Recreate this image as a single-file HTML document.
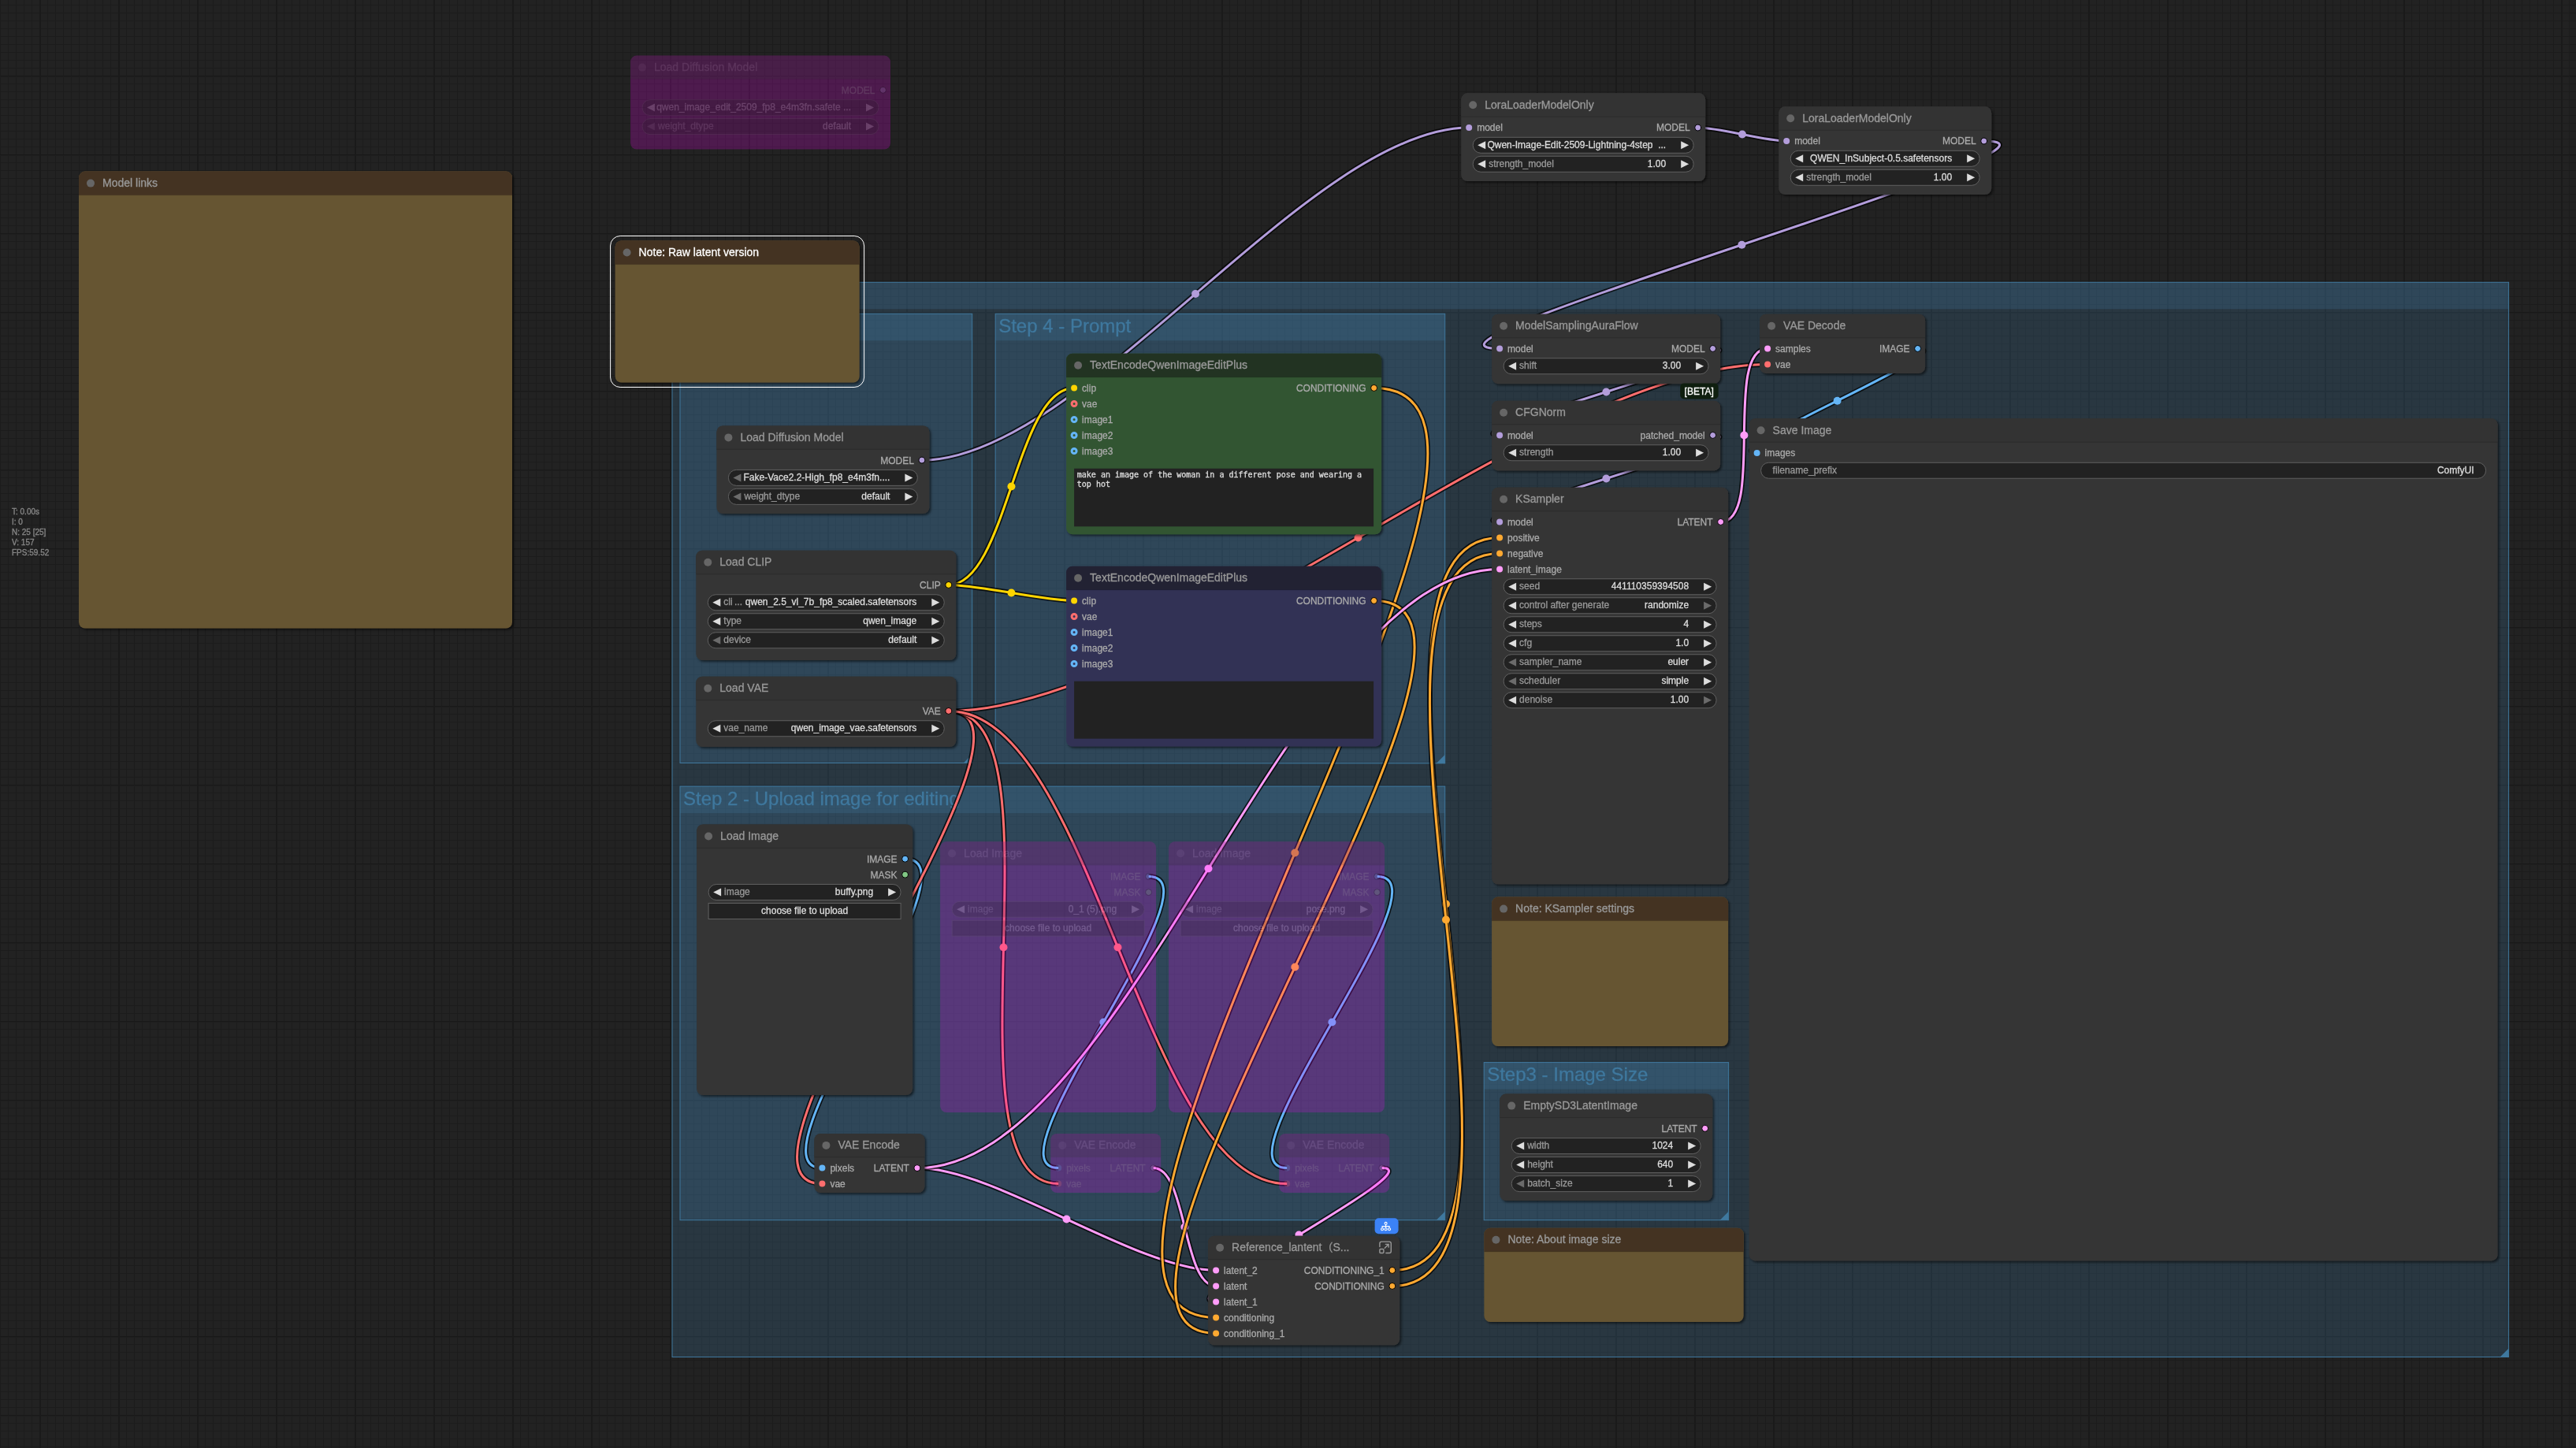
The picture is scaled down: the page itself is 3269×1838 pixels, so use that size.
<!DOCTYPE html>
<html lang="en">
<head>
<meta charset="utf-8">
<title>ComfyUI</title>
<style>
html,body{margin:0;padding:0;}
body{width:3269px;height:1838px;overflow:hidden;background-color:#222;
background-image:
 linear-gradient(to right,#1a1a1a 2px,transparent 2px),
 linear-gradient(to bottom,#191919 1px,#1e1e1e 1px,#1e1e1e 2px,transparent 2px),
 linear-gradient(to right,#1c1c1c 1px,transparent 1px),
 linear-gradient(to bottom,#1c1c1c 1px,transparent 1px);
background-size:100px 100px,100px 100px,10px 10px,10px 10px;
background-position:50px 0,0 96px,0 0,0 6px;}
svg{display:block;position:absolute;left:0;top:0;will-change:transform;}
text{white-space:pre;stroke-width:0.3px;}
</style>
</head>
<body>
<svg width="3269" height="1838" viewBox="0 0 3269 1838" font-family='"Liberation Sans", Arial, "Noto Sans CJK SC", sans-serif'><defs><filter id="sh" x="-5%" y="-5%" width="115%" height="115%"><feDropShadow dx="2" dy="2" stdDeviation="1.6" flood-color="#000" flood-opacity="0.55"/></filter></defs><g id="groups"><rect x="853" y="358.3" width="2330.6" height="34" fill="#3f789e" fill-opacity="0.25"/><rect x="853" y="358.3" width="2330.6" height="1364.2" fill="#3f789e" fill-opacity="0.25"/><rect x="853" y="358.3" width="2330.6" height="1364.2" fill="none" stroke="#3f789e" stroke-width="1"/><path d="M3183.6 1722.5H3172.6L3183.6 1711.5Z" fill="#3f789e"/><rect x="863" y="398.3" width="370.7" height="34" fill="#3f789e" fill-opacity="0.25"/><rect x="863" y="398.3" width="370.7" height="570.2" fill="#3f789e" fill-opacity="0.25"/><rect x="863" y="398.3" width="370.7" height="570.2" fill="none" stroke="#3f789e" stroke-width="1"/><path d="M1233.7 968.5H1222.7L1233.7 957.5Z" fill="#3f789e"/><rect x="1263.2" y="398.3" width="570.5" height="34" fill="#3f789e" fill-opacity="0.25"/><rect x="1263.2" y="398.3" width="570.5" height="570.6" fill="#3f789e" fill-opacity="0.25"/><rect x="1263.2" y="398.3" width="570.5" height="570.6" fill="none" stroke="#3f789e" stroke-width="1"/><path d="M1833.7 968.9H1822.7L1833.7 957.9Z" fill="#3f789e"/><text x="1267.2" y="422" font-size="24" fill="#3f789e" stroke="#3f789e">Step 4 - Prompt</text><rect x="863" y="998.1" width="970.7" height="34" fill="#3f789e" fill-opacity="0.25"/><rect x="863" y="998.1" width="970.7" height="550.6" fill="#3f789e" fill-opacity="0.25"/><rect x="863" y="998.1" width="970.7" height="550.6" fill="none" stroke="#3f789e" stroke-width="1"/><path d="M1833.7 1548.7H1822.7L1833.7 1537.7Z" fill="#3f789e"/><text x="867" y="1021.8" font-size="24" fill="#3f789e" stroke="#3f789e">Step 2 - Upload image for editing</text><rect x="1883.2" y="1348.6" width="310.4" height="34" fill="#3f789e" fill-opacity="0.25"/><rect x="1883.2" y="1348.6" width="310.4" height="200.1" fill="#3f789e" fill-opacity="0.25"/><rect x="1883.2" y="1348.6" width="310.4" height="200.1" fill="none" stroke="#3f789e" stroke-width="1"/><path d="M2193.6 1548.7H2182.6L2193.6 1537.7Z" fill="#3f789e"/><text x="1887.2" y="1372.3" font-size="24" fill="#3f789e" stroke="#3f789e">Step3 - Image Size</text></g><g id="info" font-size="10" fill="#888" stroke="#888"><text x="15" y="652.5">T: 0.00s</text><text x="15" y="665.5">I: 0</text><text x="15" y="678.5">N: 25 [25]</text><text x="15" y="691.5">V: 157</text><text x="15" y="704.5">FPS:59.52</text></g><g id="links" fill="none" stroke-linecap="butt"><path d="M1169.9 584.1C1373.03 584.1 1661.07 162 1864.2 162" stroke="#000" stroke-opacity="0.72" stroke-width="6.4"/><path d="M1169.9 584.1C1373.03 584.1 1661.07 162 1864.2 162" stroke="#B39DDB" stroke-width="3"/><circle cx="1517.05" cy="373.05" r="5" fill="#B39DDB"/><path d="M2154.7 162C2183.14 162 2238.76 179 2267.2 179" stroke="#000" stroke-opacity="0.72" stroke-width="6.4"/><path d="M2154.7 162C2183.14 162 2238.76 179 2267.2 179" stroke="#B39DDB" stroke-width="3"/><circle cx="2210.95" cy="170.5" r="5" fill="#B39DDB"/><path d="M2517.7 179C2684.87 179 1735.93 442.45 1903.1 442.45" stroke="#000" stroke-opacity="0.72" stroke-width="6.4"/><path d="M2517.7 179C2684.87 179 1735.93 442.45 1903.1 442.45" stroke="#B39DDB" stroke-width="3"/><circle cx="2210.4" cy="310.72" r="5" fill="#B39DDB"/><path d="M2173.6 442.45C2246.6 442.45 1830.1 552.45 1903.1 552.45" stroke="#000" stroke-opacity="0.72" stroke-width="6.4"/><path d="M2173.6 442.45C2246.6 442.45 1830.1 552.45 1903.1 552.45" stroke="#B39DDB" stroke-width="3"/><circle cx="2038.35" cy="497.45" r="5" fill="#B39DDB"/><path d="M1203.8 742.45C1277.91 742.45 1288.99 492.45 1363.1 492.45" stroke="#000" stroke-opacity="0.72" stroke-width="6.4"/><path d="M1203.8 742.45C1277.91 742.45 1288.99 492.45 1363.1 492.45" stroke="#FFD500" stroke-width="3"/><circle cx="1283.45" cy="617.45" r="5" fill="#FFD500"/><path d="M1203.8 742.45C1243.94 742.45 1322.96 762.45 1363.1 762.45" stroke="#000" stroke-opacity="0.72" stroke-width="6.4"/><path d="M1203.8 742.45C1243.94 742.45 1322.96 762.45 1363.1 762.45" stroke="#FFD500" stroke-width="3"/><circle cx="1283.45" cy="752.45" r="5" fill="#FFD500"/><path d="M1203.8 902.45C1485.95 902.45 1960.95 462.45 2243.1 462.45" stroke="#000" stroke-opacity="0.72" stroke-width="6.4"/><path d="M1203.8 902.45C1485.95 902.45 1960.95 462.45 2243.1 462.45" stroke="#FF6E6E" stroke-width="3"/><circle cx="1723.45" cy="682.45" r="5" fill="#FF6E6E"/><path d="M2183.6 662.45C2240.58 662.45 2186.12 442.45 2243.1 442.45" stroke="#000" stroke-opacity="0.72" stroke-width="6.4"/><path d="M2183.6 662.45C2240.58 662.45 2186.12 442.45 2243.1 442.45" stroke="#FF9CF9" stroke-width="3"/><circle cx="2213.35" cy="552.45" r="5" fill="#FF9CF9"/><path d="M2433.6 442.45C2494.41 442.45 2168.79 574.95 2229.6 574.95" stroke="#000" stroke-opacity="0.72" stroke-width="6.4"/><path d="M2433.6 442.45C2494.41 442.45 2168.79 574.95 2229.6 574.95" stroke="#64B5F6" stroke-width="3"/><circle cx="2331.6" cy="508.7" r="5" fill="#64B5F6"/><path d="M1148.6 1090.2C1250.16 1090.2 941.84 1482.6 1043.4 1482.6" stroke="#000" stroke-opacity="0.72" stroke-width="6.4"/><path d="M1148.6 1090.2C1250.16 1090.2 941.84 1482.6 1043.4 1482.6" stroke="#64B5F6" stroke-width="3"/><circle cx="1096" cy="1286.4" r="5" fill="#64B5F6"/><path d="M1203.8 902.45C1359.1 902.45 888.1 1502.6 1043.4 1502.6" stroke="#000" stroke-opacity="0.72" stroke-width="6.4"/><path d="M1203.8 902.45C1359.1 902.45 888.1 1502.6 1043.4 1502.6" stroke="#FF6E6E" stroke-width="3"/><circle cx="1123.6" cy="1202.53" r="5" fill="#FF6E6E"/><path d="M1457.6 1112.55C1554.43 1112.55 1246.37 1482.6 1343.2 1482.6" stroke="#000" stroke-opacity="0.72" stroke-width="6.4"/><path d="M1457.6 1112.55C1554.43 1112.55 1246.37 1482.6 1343.2 1482.6" stroke="#64B5F6" stroke-width="3"/><circle cx="1400.4" cy="1297.58" r="5" fill="#64B5F6"/><path d="M1203.8 902.45C1357.83 902.45 1189.17 1502.6 1343.2 1502.6" stroke="#000" stroke-opacity="0.72" stroke-width="6.4"/><path d="M1203.8 902.45C1357.83 902.45 1189.17 1502.6 1343.2 1502.6" stroke="#FF6E6E" stroke-width="3"/><circle cx="1273.5" cy="1202.53" r="5" fill="#FF6E6E"/><path d="M1747.6 1112.55C1844.43 1112.55 1536.37 1482.6 1633.2 1482.6" stroke="#000" stroke-opacity="0.72" stroke-width="6.4"/><path d="M1747.6 1112.55C1844.43 1112.55 1536.37 1482.6 1633.2 1482.6" stroke="#64B5F6" stroke-width="3"/><circle cx="1690.4" cy="1297.58" r="5" fill="#64B5F6"/><path d="M1203.8 902.45C1388.29 902.45 1448.71 1502.6 1633.2 1502.6" stroke="#000" stroke-opacity="0.72" stroke-width="6.4"/><path d="M1203.8 902.45C1388.29 902.45 1448.71 1502.6 1633.2 1502.6" stroke="#FF6E6E" stroke-width="3"/><circle cx="1418.5" cy="1202.53" r="5" fill="#FF6E6E"/><path d="M1163.9 1482.6C1264.1 1482.6 1442.9 1612.45 1543.1 1612.45" stroke="#000" stroke-opacity="0.72" stroke-width="6.4"/><path d="M1163.9 1482.6C1264.1 1482.6 1442.9 1612.45 1543.1 1612.45" stroke="#FF9CF9" stroke-width="3"/><circle cx="1353.5" cy="1547.53" r="5" fill="#FF9CF9"/><path d="M1463.7 1482.6C1506.1 1482.6 1500.7 1632.45 1543.1 1632.45" stroke="#000" stroke-opacity="0.72" stroke-width="6.4"/><path d="M1463.7 1482.6C1506.1 1482.6 1500.7 1632.45 1543.1 1632.45" stroke="#FF9CF9" stroke-width="3"/><circle cx="1503.4" cy="1557.53" r="5" fill="#FF9CF9"/><path d="M1753.7 1482.6C1821.34 1482.6 1475.46 1652.45 1543.1 1652.45" stroke="#000" stroke-opacity="0.72" stroke-width="6.4"/><path d="M1753.7 1482.6C1821.34 1482.6 1475.46 1652.45 1543.1 1652.45" stroke="#FF9CF9" stroke-width="3"/><circle cx="1648.4" cy="1567.53" r="5" fill="#FF9CF9"/><path d="M1743.6 492.45C2042.83 492.45 1243.87 1672.45 1543.1 1672.45" stroke="#000" stroke-opacity="0.72" stroke-width="6.4"/><path d="M1743.6 492.45C2042.83 492.45 1243.87 1672.45 1543.1 1672.45" stroke="#FFA931" stroke-width="3"/><circle cx="1643.35" cy="1082.45" r="5" fill="#FFA931"/><path d="M1743.6 762.45C1981.44 762.45 1305.26 1692.45 1543.1 1692.45" stroke="#000" stroke-opacity="0.72" stroke-width="6.4"/><path d="M1743.6 762.45C1981.44 762.45 1305.26 1692.45 1543.1 1692.45" stroke="#FFA931" stroke-width="3"/><circle cx="1643.35" cy="1227.45" r="5" fill="#FFA931"/><path d="M2173.6 552.45C2246.6 552.45 1830.1 662.45 1903.1 662.45" stroke="#000" stroke-opacity="0.72" stroke-width="6.4"/><path d="M2173.6 552.45C2246.6 552.45 1830.1 662.45 1903.1 662.45" stroke="#B39DDB" stroke-width="3"/><circle cx="2038.35" cy="607.45" r="5" fill="#B39DDB"/><path d="M1766.8 1612.45C2001.78 1612.45 1668.12 682.45 1903.1 682.45" stroke="#000" stroke-opacity="0.72" stroke-width="6.4"/><path d="M1766.8 1612.45C2001.78 1612.45 1668.12 682.45 1903.1 682.45" stroke="#FFA931" stroke-width="3"/><circle cx="1834.95" cy="1147.45" r="5" fill="#FFA931"/><path d="M1766.8 1632.45C2001.78 1632.45 1668.12 702.45 1903.1 702.45" stroke="#000" stroke-opacity="0.72" stroke-width="6.4"/><path d="M1766.8 1632.45C2001.78 1632.45 1668.12 702.45 1903.1 702.45" stroke="#FFA931" stroke-width="3"/><circle cx="1834.95" cy="1167.45" r="5" fill="#FFA931"/><path d="M1163.9 1482.6C1428.98 1482.6 1638.02 722.45 1903.1 722.45" stroke="#000" stroke-opacity="0.72" stroke-width="6.4"/><path d="M1163.9 1482.6C1428.98 1482.6 1638.02 722.45 1903.1 722.45" stroke="#FF9CF9" stroke-width="3"/><circle cx="1533.5" cy="1102.53" r="5" fill="#FF9CF9"/></g><g id="nodes"><g filter="url(#sh)"><rect x="100" y="217.6" width="550" height="579.9" rx="8" fill="#653"/></g><g><path d="M108 217.6H642A8 8 0 0 1 650 225.6V247.6H100V225.6A8 8 0 0 1 108 217.6Z" fill="#432"/><rect x="100" y="247" width="550" height="1.2" fill="#000" fill-opacity="0.13"/><circle cx="115" cy="232.6" r="5" fill="#666"/><text x="130" y="237.1" font-size="14" fill="#999" stroke="#999">Model links</text></g><g opacity="0.2"><rect x="800" y="70.6" width="330" height="118.9" rx="8" fill="#FF00FF"/></g><g opacity="0.2"><path d="M808 70.6H1122A8 8 0 0 1 1130 78.6V100.6H800V78.6A8 8 0 0 1 808 70.6Z" fill="#333"/><rect x="800" y="100" width="330" height="1.2" fill="#000" fill-opacity="0.13"/><circle cx="815" cy="85.6" r="5" fill="#666"/><text x="830" y="90.1" font-size="14" fill="#999" stroke="#999">Load Diffusion Model</text><circle cx="1120.5" cy="114.3" r="4" fill="#B39DDB" stroke="#000" stroke-width="1"/><text x="1110.5" y="118.7" font-size="12" fill="#AAA" stroke="#AAA" text-anchor="end">MODEL</text><rect x="815" y="126.6" width="300" height="20" rx="10" fill="#222" stroke="#606060"/><path d="M831 131.6L821 136.6L831 141.6Z" fill="#DDD"/><path d="M1099 131.6L1109 136.6L1099 141.6Z" fill="#DDD"/><text x="1080" y="140.1" font-size="12" fill="#DDD" stroke="#DDD" text-anchor="end">qwen_image_edit_2509_fp8_e4m3fn.safete ...</text><rect x="815" y="150.6" width="300" height="20" rx="10" fill="#222" stroke="#606060"/><path d="M831 155.6L821 160.6L831 165.6Z" fill="#6b6b6b"/><path d="M1099 155.6L1109 160.6L1099 165.6Z" fill="#DDD"/><text x="835" y="164.1" font-size="12" fill="#999" stroke="#999">weight_dtype</text><text x="1080" y="164.1" font-size="12" fill="#DDD" stroke="#DDD" text-anchor="end">default</text></g><g filter="url(#sh)"><rect x="909.4" y="540.4" width="270" height="111.6" rx="8" fill="#353535"/></g><g><path d="M917.4 540.4H1171.4A8 8 0 0 1 1179.4 548.4V570.4H909.4V548.4A8 8 0 0 1 917.4 540.4Z" fill="#333"/><rect x="909.4" y="569.8" width="270" height="1.2" fill="#000" fill-opacity="0.13"/><circle cx="924.4" cy="555.4" r="5" fill="#666"/><text x="939.4" y="559.9" font-size="14" fill="#999" stroke="#999">Load Diffusion Model</text><circle cx="1169.9" cy="584.1" r="4" fill="#B39DDB" stroke="#000" stroke-width="1"/><text x="1159.9" y="588.5" font-size="12" fill="#AAA" stroke="#AAA" text-anchor="end">MODEL</text><rect x="924.4" y="596.4" width="240" height="20" rx="10" fill="#222" stroke="#606060"/><path d="M940.4 601.4L930.4 606.4L940.4 611.4Z" fill="#6b6b6b"/><path d="M1148.4 601.4L1158.4 606.4L1148.4 611.4Z" fill="#DDD"/><text x="1129.4" y="609.9" font-size="12" fill="#DDD" stroke="#DDD" text-anchor="end">Fake-Vace2.2-High_fp8_e4m3fn....</text><rect x="924.4" y="620.4" width="240" height="20" rx="10" fill="#222" stroke="#606060"/><path d="M940.4 625.4L930.4 630.4L940.4 635.4Z" fill="#6b6b6b"/><path d="M1148.4 625.4L1158.4 630.4L1148.4 635.4Z" fill="#DDD"/><text x="944.4" y="633.9" font-size="12" fill="#999" stroke="#999">weight_dtype</text><text x="1129.4" y="633.9" font-size="12" fill="#DDD" stroke="#DDD" text-anchor="end">default</text></g><g filter="url(#sh)"><rect x="883.3" y="698.75" width="330" height="139.25" rx="8" fill="#353535"/></g><g><path d="M891.3 698.75H1205.3A8 8 0 0 1 1213.3 706.75V728.75H883.3V706.75A8 8 0 0 1 891.3 698.75Z" fill="#333"/><rect x="883.3" y="728.15" width="330" height="1.2" fill="#000" fill-opacity="0.13"/><circle cx="898.3" cy="713.75" r="5" fill="#666"/><text x="913.3" y="718.25" font-size="14" fill="#999" stroke="#999">Load CLIP</text><circle cx="1203.8" cy="742.45" r="4" fill="#FFD500" stroke="#000" stroke-width="1"/><text x="1193.8" y="746.85" font-size="12" fill="#AAA" stroke="#AAA" text-anchor="end">CLIP</text><rect x="898.3" y="754.75" width="300" height="20" rx="10" fill="#222" stroke="#606060"/><path d="M914.3 759.75L904.3 764.75L914.3 769.75Z" fill="#DDD"/><path d="M1182.3 759.75L1192.3 764.75L1182.3 769.75Z" fill="#DDD"/><text x="918.3" y="768.25" font-size="12" fill="#999" stroke="#999">cli ...</text><text x="1163.3" y="768.25" font-size="12" fill="#DDD" stroke="#DDD" text-anchor="end">qwen_2.5_vl_7b_fp8_scaled.safetensors</text><rect x="898.3" y="778.75" width="300" height="20" rx="10" fill="#222" stroke="#606060"/><path d="M914.3 783.75L904.3 788.75L914.3 793.75Z" fill="#DDD"/><path d="M1182.3 783.75L1192.3 788.75L1182.3 793.75Z" fill="#DDD"/><text x="918.3" y="792.25" font-size="12" fill="#999" stroke="#999">type</text><text x="1163.3" y="792.25" font-size="12" fill="#DDD" stroke="#DDD" text-anchor="end">qwen_image</text><rect x="898.3" y="802.75" width="300" height="20" rx="10" fill="#222" stroke="#606060"/><path d="M914.3 807.75L904.3 812.75L914.3 817.75Z" fill="#6b6b6b"/><path d="M1182.3 807.75L1192.3 812.75L1182.3 817.75Z" fill="#DDD"/><text x="918.3" y="816.25" font-size="12" fill="#999" stroke="#999">device</text><text x="1163.3" y="816.25" font-size="12" fill="#DDD" stroke="#DDD" text-anchor="end">default</text></g><g filter="url(#sh)"><rect x="883.3" y="858.75" width="330" height="89.25" rx="8" fill="#353535"/></g><g><path d="M891.3 858.75H1205.3A8 8 0 0 1 1213.3 866.75V888.75H883.3V866.75A8 8 0 0 1 891.3 858.75Z" fill="#333"/><rect x="883.3" y="888.15" width="330" height="1.2" fill="#000" fill-opacity="0.13"/><circle cx="898.3" cy="873.75" r="5" fill="#666"/><text x="913.3" y="878.25" font-size="14" fill="#999" stroke="#999">Load VAE</text><circle cx="1203.8" cy="902.45" r="4" fill="#FF6E6E" stroke="#000" stroke-width="1"/><text x="1193.8" y="906.85" font-size="12" fill="#AAA" stroke="#AAA" text-anchor="end">VAE</text><rect x="898.3" y="914.75" width="300" height="20" rx="10" fill="#222" stroke="#606060"/><path d="M914.3 919.75L904.3 924.75L914.3 929.75Z" fill="#DDD"/><path d="M1182.3 919.75L1192.3 924.75L1182.3 929.75Z" fill="#DDD"/><text x="918.3" y="928.25" font-size="12" fill="#999" stroke="#999">vae_name</text><text x="1163.3" y="928.25" font-size="12" fill="#DDD" stroke="#DDD" text-anchor="end">qwen_image_vae.safetensors</text></g><g filter="url(#sh)"><rect x="1353.1" y="448.75" width="400" height="229.55" rx="8" fill="#353"/></g><g><path d="M1361.1 448.75H1745.1A8 8 0 0 1 1753.1 456.75V478.75H1353.1V456.75A8 8 0 0 1 1361.1 448.75Z" fill="#232"/><rect x="1353.1" y="478.15" width="400" height="1.2" fill="#000" fill-opacity="0.13"/><circle cx="1368.1" cy="463.75" r="5" fill="#666"/><text x="1383.1" y="468.25" font-size="14" fill="#999" stroke="#999">TextEncodeQwenImageEditPlus</text><circle cx="1363.1" cy="492.45" r="4" fill="#FFD500"/><text x="1373.1" y="496.85" font-size="12" fill="#AAA" stroke="#AAA">clip</text><circle cx="1363.1" cy="512.45" r="3" fill="none" stroke="#FF6E6E" stroke-width="3"/><text x="1373.1" y="516.85" font-size="12" fill="#AAA" stroke="#AAA">vae</text><circle cx="1363.1" cy="532.45" r="3" fill="none" stroke="#64B5F6" stroke-width="3"/><text x="1373.1" y="536.85" font-size="12" fill="#AAA" stroke="#AAA">image1</text><circle cx="1363.1" cy="552.45" r="3" fill="none" stroke="#64B5F6" stroke-width="3"/><text x="1373.1" y="556.85" font-size="12" fill="#AAA" stroke="#AAA">image2</text><circle cx="1363.1" cy="572.45" r="3" fill="none" stroke="#64B5F6" stroke-width="3"/><text x="1373.1" y="576.85" font-size="12" fill="#AAA" stroke="#AAA">image3</text><circle cx="1743.6" cy="492.45" r="4" fill="#FFA931" stroke="#000" stroke-width="1"/><text x="1733.6" y="496.85" font-size="12" fill="#AAA" stroke="#AAA" text-anchor="end">CONDITIONING</text><rect x="1363.1" y="594.75" width="380" height="73.55" fill="#222"/><text x="1366.8" y="605.75" font-size="10" fill="#ddd" stroke="#ddd" font-family='"DejaVu Sans Mono", "Liberation Mono", monospace'>make an image of the woman in a different pose and wearing a</text><text x="1366.8" y="617.75" font-size="10" fill="#ddd" stroke="#ddd" font-family='"DejaVu Sans Mono", "Liberation Mono", monospace'>top hot</text></g><g filter="url(#sh)"><rect x="1353.1" y="718.75" width="400" height="228.85" rx="8" fill="#335"/></g><g><path d="M1361.1 718.75H1745.1A8 8 0 0 1 1753.1 726.75V748.75H1353.1V726.75A8 8 0 0 1 1361.1 718.75Z" fill="#223"/><rect x="1353.1" y="748.15" width="400" height="1.2" fill="#000" fill-opacity="0.13"/><circle cx="1368.1" cy="733.75" r="5" fill="#666"/><text x="1383.1" y="738.25" font-size="14" fill="#999" stroke="#999">TextEncodeQwenImageEditPlus</text><circle cx="1363.1" cy="762.45" r="4" fill="#FFD500"/><text x="1373.1" y="766.85" font-size="12" fill="#AAA" stroke="#AAA">clip</text><circle cx="1363.1" cy="782.45" r="3" fill="none" stroke="#FF6E6E" stroke-width="3"/><text x="1373.1" y="786.85" font-size="12" fill="#AAA" stroke="#AAA">vae</text><circle cx="1363.1" cy="802.45" r="3" fill="none" stroke="#64B5F6" stroke-width="3"/><text x="1373.1" y="806.85" font-size="12" fill="#AAA" stroke="#AAA">image1</text><circle cx="1363.1" cy="822.45" r="3" fill="none" stroke="#64B5F6" stroke-width="3"/><text x="1373.1" y="826.85" font-size="12" fill="#AAA" stroke="#AAA">image2</text><circle cx="1363.1" cy="842.45" r="3" fill="none" stroke="#64B5F6" stroke-width="3"/><text x="1373.1" y="846.85" font-size="12" fill="#AAA" stroke="#AAA">image3</text><circle cx="1743.6" cy="762.45" r="4" fill="#FFA931" stroke="#000" stroke-width="1"/><text x="1733.6" y="766.85" font-size="12" fill="#AAA" stroke="#AAA" text-anchor="end">CONDITIONING</text><rect x="1363.1" y="864.75" width="380" height="72.85" fill="#222"/></g><g filter="url(#sh)"><rect x="1854.2" y="118.3" width="310" height="111.7" rx="8" fill="#353535"/></g><g><path d="M1862.2 118.3H2156.2A8 8 0 0 1 2164.2 126.3V148.3H1854.2V126.3A8 8 0 0 1 1862.2 118.3Z" fill="#333"/><rect x="1854.2" y="147.7" width="310" height="1.2" fill="#000" fill-opacity="0.13"/><circle cx="1869.2" cy="133.3" r="5" fill="#666"/><text x="1884.2" y="137.8" font-size="14" fill="#999" stroke="#999">LoraLoaderModelOnly</text><circle cx="1864.2" cy="162" r="4" fill="#B39DDB"/><text x="1874.2" y="166.4" font-size="12" fill="#AAA" stroke="#AAA">model</text><circle cx="2154.7" cy="162" r="4" fill="#B39DDB" stroke="#000" stroke-width="1"/><text x="2144.7" y="166.4" font-size="12" fill="#AAA" stroke="#AAA" text-anchor="end">MODEL</text><rect x="1869.2" y="174.3" width="280" height="20" rx="10" fill="#222" stroke="#606060"/><path d="M1885.2 179.3L1875.2 184.3L1885.2 189.3Z" fill="#DDD"/><path d="M2133.2 179.3L2143.2 184.3L2133.2 189.3Z" fill="#DDD"/><text x="2114.2" y="187.8" font-size="12" fill="#DDD" stroke="#DDD" text-anchor="end">Qwen-Image-Edit-2509-Lightning-4step  ...</text><rect x="1869.2" y="198.3" width="280" height="20" rx="10" fill="#222" stroke="#606060"/><path d="M1885.2 203.3L1875.2 208.3L1885.2 213.3Z" fill="#DDD"/><path d="M2133.2 203.3L2143.2 208.3L2133.2 213.3Z" fill="#DDD"/><text x="1889.2" y="211.8" font-size="12" fill="#999" stroke="#999">strength_model</text><text x="2114.2" y="211.8" font-size="12" fill="#DDD" stroke="#DDD" text-anchor="end">1.00</text></g><g filter="url(#sh)"><rect x="2257.2" y="135.3" width="270" height="111.7" rx="8" fill="#353535"/></g><g><path d="M2265.2 135.3H2519.2A8 8 0 0 1 2527.2 143.3V165.3H2257.2V143.3A8 8 0 0 1 2265.2 135.3Z" fill="#333"/><rect x="2257.2" y="164.7" width="270" height="1.2" fill="#000" fill-opacity="0.13"/><circle cx="2272.2" cy="150.3" r="5" fill="#666"/><text x="2287.2" y="154.8" font-size="14" fill="#999" stroke="#999">LoraLoaderModelOnly</text><circle cx="2267.2" cy="179" r="4" fill="#B39DDB"/><text x="2277.2" y="183.4" font-size="12" fill="#AAA" stroke="#AAA">model</text><circle cx="2517.7" cy="179" r="4" fill="#B39DDB" stroke="#000" stroke-width="1"/><text x="2507.7" y="183.4" font-size="12" fill="#AAA" stroke="#AAA" text-anchor="end">MODEL</text><rect x="2272.2" y="191.3" width="240" height="20" rx="10" fill="#222" stroke="#606060"/><path d="M2288.2 196.3L2278.2 201.3L2288.2 206.3Z" fill="#DDD"/><path d="M2496.2 196.3L2506.2 201.3L2496.2 206.3Z" fill="#DDD"/><text x="2477.2" y="204.8" font-size="12" fill="#DDD" stroke="#DDD" text-anchor="end">QWEN_InSubject-0.5.safetensors</text><rect x="2272.2" y="215.3" width="240" height="20" rx="10" fill="#222" stroke="#606060"/><path d="M2288.2 220.3L2278.2 225.3L2288.2 230.3Z" fill="#DDD"/><path d="M2496.2 220.3L2506.2 225.3L2496.2 230.3Z" fill="#DDD"/><text x="2292.2" y="228.8" font-size="12" fill="#999" stroke="#999">strength_model</text><text x="2477.2" y="228.8" font-size="12" fill="#DDD" stroke="#DDD" text-anchor="end">1.00</text></g><g filter="url(#sh)"><rect x="1893.1" y="398.75" width="290" height="88.45" rx="8" fill="#353535"/></g><g><path d="M1901.1 398.75H2175.1A8 8 0 0 1 2183.1 406.75V428.75H1893.1V406.75A8 8 0 0 1 1901.1 398.75Z" fill="#333"/><rect x="1893.1" y="428.15" width="290" height="1.2" fill="#000" fill-opacity="0.13"/><circle cx="1908.1" cy="413.75" r="5" fill="#666"/><text x="1923.1" y="418.25" font-size="14" fill="#999" stroke="#999">ModelSamplingAuraFlow</text><circle cx="1903.1" cy="442.45" r="4" fill="#B39DDB"/><text x="1913.1" y="446.85" font-size="12" fill="#AAA" stroke="#AAA">model</text><circle cx="2173.6" cy="442.45" r="4" fill="#B39DDB" stroke="#000" stroke-width="1"/><text x="2163.6" y="446.85" font-size="12" fill="#AAA" stroke="#AAA" text-anchor="end">MODEL</text><rect x="1908.1" y="454.75" width="260" height="20" rx="10" fill="#222" stroke="#606060"/><path d="M1924.1 459.75L1914.1 464.75L1924.1 469.75Z" fill="#DDD"/><path d="M2152.1 459.75L2162.1 464.75L2152.1 469.75Z" fill="#DDD"/><text x="1928.1" y="468.25" font-size="12" fill="#999" stroke="#999">shift</text><text x="2133.1" y="468.25" font-size="12" fill="#DDD" stroke="#DDD" text-anchor="end">3.00</text></g><g filter="url(#sh)"><rect x="1893.1" y="508.75" width="290" height="88.65" rx="8" fill="#353535"/></g><g><path d="M1901.1 508.75H2175.1A8 8 0 0 1 2183.1 516.75V538.75H1893.1V516.75A8 8 0 0 1 1901.1 508.75Z" fill="#333"/><rect x="1893.1" y="538.15" width="290" height="1.2" fill="#000" fill-opacity="0.13"/><circle cx="1908.1" cy="523.75" r="5" fill="#666"/><text x="1923.1" y="528.25" font-size="14" fill="#999" stroke="#999">CFGNorm</text><circle cx="1903.1" cy="552.45" r="4" fill="#B39DDB"/><text x="1913.1" y="556.85" font-size="12" fill="#AAA" stroke="#AAA">model</text><circle cx="2173.6" cy="552.45" r="4" fill="#B39DDB" stroke="#000" stroke-width="1"/><text x="2163.6" y="556.85" font-size="12" fill="#AAA" stroke="#AAA" text-anchor="end">patched_model</text><rect x="1908.1" y="564.75" width="260" height="20" rx="10" fill="#222" stroke="#606060"/><path d="M1924.1 569.75L1914.1 574.75L1924.1 579.75Z" fill="#DDD"/><path d="M2152.1 569.75L2162.1 574.75L2152.1 579.75Z" fill="#DDD"/><text x="1928.1" y="578.25" font-size="12" fill="#999" stroke="#999">strength</text><text x="2133.1" y="578.25" font-size="12" fill="#DDD" stroke="#DDD" text-anchor="end">1.00</text></g><g filter="url(#sh)"><rect x="1893.1" y="618.75" width="300" height="503.75" rx="8" fill="#353535"/></g><g><path d="M1901.1 618.75H2185.1A8 8 0 0 1 2193.1 626.75V648.75H1893.1V626.75A8 8 0 0 1 1901.1 618.75Z" fill="#333"/><rect x="1893.1" y="648.15" width="300" height="1.2" fill="#000" fill-opacity="0.13"/><circle cx="1908.1" cy="633.75" r="5" fill="#666"/><text x="1923.1" y="638.25" font-size="14" fill="#999" stroke="#999">KSampler</text><circle cx="1903.1" cy="662.45" r="4" fill="#B39DDB"/><text x="1913.1" y="666.85" font-size="12" fill="#AAA" stroke="#AAA">model</text><circle cx="1903.1" cy="682.45" r="4" fill="#FFA931"/><text x="1913.1" y="686.85" font-size="12" fill="#AAA" stroke="#AAA">positive</text><circle cx="1903.1" cy="702.45" r="4" fill="#FFA931"/><text x="1913.1" y="706.85" font-size="12" fill="#AAA" stroke="#AAA">negative</text><circle cx="1903.1" cy="722.45" r="4" fill="#FF9CF9"/><text x="1913.1" y="726.85" font-size="12" fill="#AAA" stroke="#AAA">latent_image</text><circle cx="2183.6" cy="662.45" r="4" fill="#FF9CF9" stroke="#000" stroke-width="1"/><text x="2173.6" y="666.85" font-size="12" fill="#AAA" stroke="#AAA" text-anchor="end">LATENT</text><rect x="1908.1" y="734.75" width="270" height="20" rx="10" fill="#222" stroke="#606060"/><path d="M1924.1 739.75L1914.1 744.75L1924.1 749.75Z" fill="#DDD"/><path d="M2162.1 739.75L2172.1 744.75L2162.1 749.75Z" fill="#DDD"/><text x="1928.1" y="748.25" font-size="12" fill="#999" stroke="#999">seed</text><text x="2143.1" y="748.25" font-size="12" fill="#DDD" stroke="#DDD" text-anchor="end">441110359394508</text><rect x="1908.1" y="758.75" width="270" height="20" rx="10" fill="#222" stroke="#606060"/><path d="M1924.1 763.75L1914.1 768.75L1924.1 773.75Z" fill="#DDD"/><path d="M2162.1 763.75L2172.1 768.75L2162.1 773.75Z" fill="#6b6b6b"/><text x="1928.1" y="772.25" font-size="12" fill="#999" stroke="#999">control after generate</text><text x="2143.1" y="772.25" font-size="12" fill="#DDD" stroke="#DDD" text-anchor="end">randomize</text><rect x="1908.1" y="782.75" width="270" height="20" rx="10" fill="#222" stroke="#606060"/><path d="M1924.1 787.75L1914.1 792.75L1924.1 797.75Z" fill="#DDD"/><path d="M2162.1 787.75L2172.1 792.75L2162.1 797.75Z" fill="#DDD"/><text x="1928.1" y="796.25" font-size="12" fill="#999" stroke="#999">steps</text><text x="2143.1" y="796.25" font-size="12" fill="#DDD" stroke="#DDD" text-anchor="end">4</text><rect x="1908.1" y="806.75" width="270" height="20" rx="10" fill="#222" stroke="#606060"/><path d="M1924.1 811.75L1914.1 816.75L1924.1 821.75Z" fill="#DDD"/><path d="M2162.1 811.75L2172.1 816.75L2162.1 821.75Z" fill="#DDD"/><text x="1928.1" y="820.25" font-size="12" fill="#999" stroke="#999">cfg</text><text x="2143.1" y="820.25" font-size="12" fill="#DDD" stroke="#DDD" text-anchor="end">1.0</text><rect x="1908.1" y="830.75" width="270" height="20" rx="10" fill="#222" stroke="#606060"/><path d="M1924.1 835.75L1914.1 840.75L1924.1 845.75Z" fill="#6b6b6b"/><path d="M2162.1 835.75L2172.1 840.75L2162.1 845.75Z" fill="#DDD"/><text x="1928.1" y="844.25" font-size="12" fill="#999" stroke="#999">sampler_name</text><text x="2143.1" y="844.25" font-size="12" fill="#DDD" stroke="#DDD" text-anchor="end">euler</text><rect x="1908.1" y="854.75" width="270" height="20" rx="10" fill="#222" stroke="#606060"/><path d="M1924.1 859.75L1914.1 864.75L1924.1 869.75Z" fill="#6b6b6b"/><path d="M2162.1 859.75L2172.1 864.75L2162.1 869.75Z" fill="#DDD"/><text x="1928.1" y="868.25" font-size="12" fill="#999" stroke="#999">scheduler</text><text x="2143.1" y="868.25" font-size="12" fill="#DDD" stroke="#DDD" text-anchor="end">simple</text><rect x="1908.1" y="878.75" width="270" height="20" rx="10" fill="#222" stroke="#606060"/><path d="M1924.1 883.75L1914.1 888.75L1924.1 893.75Z" fill="#DDD"/><path d="M2162.1 883.75L2172.1 888.75L2162.1 893.75Z" fill="#6b6b6b"/><text x="1928.1" y="892.25" font-size="12" fill="#999" stroke="#999">denoise</text><text x="2143.1" y="892.25" font-size="12" fill="#DDD" stroke="#DDD" text-anchor="end">1.00</text></g><g filter="url(#sh)"><rect x="2233.1" y="398.75" width="210" height="75.15" rx="8" fill="#353535"/></g><g><path d="M2241.1 398.75H2435.1A8 8 0 0 1 2443.1 406.75V428.75H2233.1V406.75A8 8 0 0 1 2241.1 398.75Z" fill="#333"/><rect x="2233.1" y="428.15" width="210" height="1.2" fill="#000" fill-opacity="0.13"/><circle cx="2248.1" cy="413.75" r="5" fill="#666"/><text x="2263.1" y="418.25" font-size="14" fill="#999" stroke="#999">VAE Decode</text><circle cx="2243.1" cy="442.45" r="4" fill="#FF9CF9"/><text x="2253.1" y="446.85" font-size="12" fill="#AAA" stroke="#AAA">samples</text><circle cx="2243.1" cy="462.45" r="4" fill="#FF6E6E"/><text x="2253.1" y="466.85" font-size="12" fill="#AAA" stroke="#AAA">vae</text><circle cx="2433.6" cy="442.45" r="4" fill="#64B5F6" stroke="#000" stroke-width="1"/><text x="2423.6" y="446.85" font-size="12" fill="#AAA" stroke="#AAA" text-anchor="end">IMAGE</text></g><g filter="url(#sh)"><rect x="2219.6" y="531.25" width="950" height="1069.15" rx="8" fill="#353535"/></g><g><path d="M2227.6 531.25H3161.6A8 8 0 0 1 3169.6 539.25V561.25H2219.6V539.25A8 8 0 0 1 2227.6 531.25Z" fill="#333"/><rect x="2219.6" y="560.65" width="950" height="1.2" fill="#000" fill-opacity="0.13"/><circle cx="2234.6" cy="546.25" r="5" fill="#666"/><text x="2249.6" y="550.75" font-size="14" fill="#999" stroke="#999">Save Image</text><circle cx="2229.6" cy="574.95" r="4" fill="#64B5F6"/><text x="2239.6" y="579.35" font-size="12" fill="#AAA" stroke="#AAA">images</text><rect x="2234.6" y="587.25" width="920" height="20" rx="10" fill="#222" stroke="#606060"/><text x="2249.6" y="600.75" font-size="12" fill="#999" stroke="#999">filename_prefix</text><text x="3139.6" y="600.75" font-size="12" fill="#DDD" stroke="#DDD" text-anchor="end">ComfyUI</text></g><g filter="url(#sh)"><rect x="1893.1" y="1138.6" width="300" height="189.4" rx="8" fill="#653"/></g><g><path d="M1901.1 1138.6H2185.1A8 8 0 0 1 2193.1 1146.6V1168.6H1893.1V1146.6A8 8 0 0 1 1901.1 1138.6Z" fill="#432"/><rect x="1893.1" y="1168" width="300" height="1.2" fill="#000" fill-opacity="0.13"/><circle cx="1908.1" cy="1153.6" r="5" fill="#666"/><text x="1923.1" y="1158.1" font-size="14" fill="#999" stroke="#999">Note: KSampler settings</text></g><g filter="url(#sh)"><rect x="1903.2" y="1388.6" width="270" height="135.4" rx="8" fill="#353535"/></g><g><path d="M1911.2 1388.6H2165.2A8 8 0 0 1 2173.2 1396.6V1418.6H1903.2V1396.6A8 8 0 0 1 1911.2 1388.6Z" fill="#333"/><rect x="1903.2" y="1418" width="270" height="1.2" fill="#000" fill-opacity="0.13"/><circle cx="1918.2" cy="1403.6" r="5" fill="#666"/><text x="1933.2" y="1408.1" font-size="14" fill="#999" stroke="#999">EmptySD3LatentImage</text><circle cx="2163.7" cy="1432.3" r="4" fill="#FF9CF9" stroke="#000" stroke-width="1"/><text x="2153.7" y="1436.7" font-size="12" fill="#AAA" stroke="#AAA" text-anchor="end">LATENT</text><rect x="1918.2" y="1444.6" width="240" height="20" rx="10" fill="#222" stroke="#606060"/><path d="M1934.2 1449.6L1924.2 1454.6L1934.2 1459.6Z" fill="#DDD"/><path d="M2142.2 1449.6L2152.2 1454.6L2142.2 1459.6Z" fill="#DDD"/><text x="1938.2" y="1458.1" font-size="12" fill="#999" stroke="#999">width</text><text x="2123.2" y="1458.1" font-size="12" fill="#DDD" stroke="#DDD" text-anchor="end">1024</text><rect x="1918.2" y="1468.6" width="240" height="20" rx="10" fill="#222" stroke="#606060"/><path d="M1934.2 1473.6L1924.2 1478.6L1934.2 1483.6Z" fill="#DDD"/><path d="M2142.2 1473.6L2152.2 1478.6L2142.2 1483.6Z" fill="#DDD"/><text x="1938.2" y="1482.1" font-size="12" fill="#999" stroke="#999">height</text><text x="2123.2" y="1482.1" font-size="12" fill="#DDD" stroke="#DDD" text-anchor="end">640</text><rect x="1918.2" y="1492.6" width="240" height="20" rx="10" fill="#222" stroke="#606060"/><path d="M1934.2 1497.6L1924.2 1502.6L1934.2 1507.6Z" fill="#6b6b6b"/><path d="M2142.2 1497.6L2152.2 1502.6L2142.2 1507.6Z" fill="#DDD"/><text x="1938.2" y="1506.1" font-size="12" fill="#999" stroke="#999">batch_size</text><text x="2123.2" y="1506.1" font-size="12" fill="#DDD" stroke="#DDD" text-anchor="end">1</text></g><g filter="url(#sh)"><rect x="1883.4" y="1558.75" width="329.2" height="119.25" rx="8" fill="#653"/></g><g><path d="M1891.4 1558.75H2204.6A8 8 0 0 1 2212.6 1566.75V1588.75H1883.4V1566.75A8 8 0 0 1 1891.4 1558.75Z" fill="#432"/><rect x="1883.4" y="1588.15" width="329.2" height="1.2" fill="#000" fill-opacity="0.13"/><circle cx="1898.4" cy="1573.75" r="5" fill="#666"/><text x="1913.4" y="1578.25" font-size="14" fill="#999" stroke="#999">Note: About image size</text></g><g filter="url(#sh)"><rect x="884.1" y="1046.5" width="274" height="343.5" rx="8" fill="#353535"/></g><g><path d="M892.1 1046.5H1150.1A8 8 0 0 1 1158.1 1054.5V1076.5H884.1V1054.5A8 8 0 0 1 892.1 1046.5Z" fill="#333"/><rect x="884.1" y="1075.9" width="274" height="1.2" fill="#000" fill-opacity="0.13"/><circle cx="899.1" cy="1061.5" r="5" fill="#666"/><text x="914.1" y="1066" font-size="14" fill="#999" stroke="#999">Load Image</text><circle cx="1148.6" cy="1090.2" r="4" fill="#64B5F6" stroke="#000" stroke-width="1"/><text x="1138.6" y="1094.6" font-size="12" fill="#AAA" stroke="#AAA" text-anchor="end">IMAGE</text><circle cx="1148.6" cy="1110.2" r="4" fill="#81C784" stroke="#000" stroke-width="1"/><text x="1138.6" y="1114.6" font-size="12" fill="#AAA" stroke="#AAA" text-anchor="end">MASK</text><rect x="899.1" y="1122.5" width="244" height="20" rx="10" fill="#222" stroke="#606060"/><path d="M915.1 1127.5L905.1 1132.5L915.1 1137.5Z" fill="#DDD"/><path d="M1127.1 1127.5L1137.1 1132.5L1127.1 1137.5Z" fill="#DDD"/><text x="919.1" y="1136" font-size="12" fill="#999" stroke="#999">image</text><text x="1108.1" y="1136" font-size="12" fill="#DDD" stroke="#DDD" text-anchor="end">buffy.png</text><rect x="899.1" y="1146.5" width="244" height="20" fill="#222" stroke="#606060"/><text x="1021.1" y="1160" font-size="12" fill="#DDD" stroke="#DDD" text-anchor="middle">choose file to upload</text></g><g opacity="0.2"><rect x="1193.1" y="1068.25" width="274" height="343.75" rx="8" fill="#FF00FF"/></g><g opacity="0.2"><path d="M1201.1 1068.25H1459.1A8 8 0 0 1 1467.1 1076.25V1098.25H1193.1V1076.25A8 8 0 0 1 1201.1 1068.25Z" fill="#333"/><rect x="1193.1" y="1097.65" width="274" height="1.2" fill="#000" fill-opacity="0.13"/><circle cx="1208.1" cy="1083.25" r="5" fill="#666"/><text x="1223.1" y="1087.75" font-size="14" fill="#999" stroke="#999">Load Image</text><circle cx="1457.6" cy="1112.55" r="4" fill="#64B5F6" stroke="#000" stroke-width="1"/><text x="1447.6" y="1116.95" font-size="12" fill="#AAA" stroke="#AAA" text-anchor="end">IMAGE</text><circle cx="1457.6" cy="1132.55" r="4" fill="#81C784" stroke="#000" stroke-width="1"/><text x="1447.6" y="1136.95" font-size="12" fill="#AAA" stroke="#AAA" text-anchor="end">MASK</text><rect x="1208.1" y="1144.25" width="244" height="20" rx="10" fill="#222" stroke="#606060"/><path d="M1224.1 1149.25L1214.1 1154.25L1224.1 1159.25Z" fill="#DDD"/><path d="M1436.1 1149.25L1446.1 1154.25L1436.1 1159.25Z" fill="#DDD"/><text x="1228.1" y="1157.75" font-size="12" fill="#999" stroke="#999">image</text><text x="1417.1" y="1157.75" font-size="12" fill="#DDD" stroke="#DDD" text-anchor="end">0_1 (5).png</text><rect x="1208.1" y="1168.25" width="244" height="20" fill="#222" stroke="#606060"/><text x="1330.1" y="1181.75" font-size="12" fill="#DDD" stroke="#DDD" text-anchor="middle">choose file to upload</text></g><g opacity="0.2"><rect x="1483.1" y="1068.25" width="274" height="343.75" rx="8" fill="#FF00FF"/></g><g opacity="0.2"><path d="M1491.1 1068.25H1749.1A8 8 0 0 1 1757.1 1076.25V1098.25H1483.1V1076.25A8 8 0 0 1 1491.1 1068.25Z" fill="#333"/><rect x="1483.1" y="1097.65" width="274" height="1.2" fill="#000" fill-opacity="0.13"/><circle cx="1498.1" cy="1083.25" r="5" fill="#666"/><text x="1513.1" y="1087.75" font-size="14" fill="#999" stroke="#999">Load Image</text><circle cx="1747.6" cy="1112.55" r="4" fill="#64B5F6" stroke="#000" stroke-width="1"/><text x="1737.6" y="1116.95" font-size="12" fill="#AAA" stroke="#AAA" text-anchor="end">IMAGE</text><circle cx="1747.6" cy="1132.55" r="4" fill="#81C784" stroke="#000" stroke-width="1"/><text x="1737.6" y="1136.95" font-size="12" fill="#AAA" stroke="#AAA" text-anchor="end">MASK</text><rect x="1498.1" y="1144.25" width="244" height="20" rx="10" fill="#222" stroke="#606060"/><path d="M1514.1 1149.25L1504.1 1154.25L1514.1 1159.25Z" fill="#DDD"/><path d="M1726.1 1149.25L1736.1 1154.25L1726.1 1159.25Z" fill="#DDD"/><text x="1518.1" y="1157.75" font-size="12" fill="#999" stroke="#999">image</text><text x="1707.1" y="1157.75" font-size="12" fill="#DDD" stroke="#DDD" text-anchor="end">pose.png</text><rect x="1498.1" y="1168.25" width="244" height="20" fill="#222" stroke="#606060"/><text x="1620.1" y="1181.75" font-size="12" fill="#DDD" stroke="#DDD" text-anchor="middle">choose file to upload</text></g><g filter="url(#sh)"><rect x="1033.4" y="1438.9" width="140" height="75.1" rx="8" fill="#353535"/></g><g><path d="M1041.4 1438.9H1165.4A8 8 0 0 1 1173.4 1446.9V1468.9H1033.4V1446.9A8 8 0 0 1 1041.4 1438.9Z" fill="#333"/><rect x="1033.4" y="1468.3" width="140" height="1.2" fill="#000" fill-opacity="0.13"/><circle cx="1048.4" cy="1453.9" r="5" fill="#666"/><text x="1063.4" y="1458.4" font-size="14" fill="#999" stroke="#999">VAE Encode</text><circle cx="1043.4" cy="1482.6" r="4" fill="#64B5F6"/><text x="1053.4" y="1487" font-size="12" fill="#AAA" stroke="#AAA">pixels</text><circle cx="1043.4" cy="1502.6" r="4" fill="#FF6E6E"/><text x="1053.4" y="1507" font-size="12" fill="#AAA" stroke="#AAA">vae</text><circle cx="1163.9" cy="1482.6" r="4" fill="#FF9CF9" stroke="#000" stroke-width="1"/><text x="1153.9" y="1487" font-size="12" fill="#AAA" stroke="#AAA" text-anchor="end">LATENT</text></g><g opacity="0.2"><rect x="1333.2" y="1438.9" width="140" height="75.1" rx="8" fill="#FF00FF"/></g><g opacity="0.2"><path d="M1341.2 1438.9H1465.2A8 8 0 0 1 1473.2 1446.9V1468.9H1333.2V1446.9A8 8 0 0 1 1341.2 1438.9Z" fill="#333"/><rect x="1333.2" y="1468.3" width="140" height="1.2" fill="#000" fill-opacity="0.13"/><circle cx="1348.2" cy="1453.9" r="5" fill="#666"/><text x="1363.2" y="1458.4" font-size="14" fill="#999" stroke="#999">VAE Encode</text><circle cx="1343.2" cy="1482.6" r="4" fill="#64B5F6"/><text x="1353.2" y="1487" font-size="12" fill="#AAA" stroke="#AAA">pixels</text><circle cx="1343.2" cy="1502.6" r="4" fill="#FF6E6E"/><text x="1353.2" y="1507" font-size="12" fill="#AAA" stroke="#AAA">vae</text><circle cx="1463.7" cy="1482.6" r="4" fill="#FF9CF9" stroke="#000" stroke-width="1"/><text x="1453.7" y="1487" font-size="12" fill="#AAA" stroke="#AAA" text-anchor="end">LATENT</text></g><g opacity="0.2"><rect x="1623.2" y="1438.9" width="140" height="75.1" rx="8" fill="#FF00FF"/></g><g opacity="0.2"><path d="M1631.2 1438.9H1755.2A8 8 0 0 1 1763.2 1446.9V1468.9H1623.2V1446.9A8 8 0 0 1 1631.2 1438.9Z" fill="#333"/><rect x="1623.2" y="1468.3" width="140" height="1.2" fill="#000" fill-opacity="0.13"/><circle cx="1638.2" cy="1453.9" r="5" fill="#666"/><text x="1653.2" y="1458.4" font-size="14" fill="#999" stroke="#999">VAE Encode</text><circle cx="1633.2" cy="1482.6" r="4" fill="#64B5F6"/><text x="1643.2" y="1487" font-size="12" fill="#AAA" stroke="#AAA">pixels</text><circle cx="1633.2" cy="1502.6" r="4" fill="#FF6E6E"/><text x="1643.2" y="1507" font-size="12" fill="#AAA" stroke="#AAA">vae</text><circle cx="1753.7" cy="1482.6" r="4" fill="#FF9CF9" stroke="#000" stroke-width="1"/><text x="1743.7" y="1487" font-size="12" fill="#AAA" stroke="#AAA" text-anchor="end">LATENT</text></g><g filter="url(#sh)"><rect x="1533.1" y="1568.75" width="243.2" height="138.85" rx="8" fill="#353535"/></g><g><path d="M1541.1 1568.75H1768.3A8 8 0 0 1 1776.3 1576.75V1598.75H1533.1V1576.75A8 8 0 0 1 1541.1 1568.75Z" fill="#333"/><rect x="1533.1" y="1598.15" width="243.2" height="1.2" fill="#000" fill-opacity="0.13"/><circle cx="1548.1" cy="1583.75" r="5" fill="#666"/><text x="1563.1" y="1588.25" font-size="14" fill="#999" stroke="#999">Reference_lantent（S...</text><circle cx="1543.1" cy="1612.45" r="4" fill="#FF9CF9"/><text x="1553.1" y="1616.85" font-size="12" fill="#AAA" stroke="#AAA">latent_2</text><circle cx="1543.1" cy="1632.45" r="4" fill="#FF9CF9"/><text x="1553.1" y="1636.85" font-size="12" fill="#AAA" stroke="#AAA">latent</text><circle cx="1543.1" cy="1652.45" r="4" fill="#FF9CF9"/><text x="1553.1" y="1656.85" font-size="12" fill="#AAA" stroke="#AAA">latent_1</text><circle cx="1543.1" cy="1672.45" r="4" fill="#FFA931"/><text x="1553.1" y="1676.85" font-size="12" fill="#AAA" stroke="#AAA">conditioning</text><circle cx="1543.1" cy="1692.45" r="4" fill="#FFA931"/><text x="1553.1" y="1696.85" font-size="12" fill="#AAA" stroke="#AAA">conditioning_1</text><circle cx="1766.8" cy="1612.45" r="4" fill="#FFA931" stroke="#000" stroke-width="1"/><text x="1756.8" y="1616.85" font-size="12" fill="#AAA" stroke="#AAA" text-anchor="end">CONDITIONING_1</text><circle cx="1766.8" cy="1632.45" r="4" fill="#FFA931" stroke="#000" stroke-width="1"/><text x="1756.8" y="1636.85" font-size="12" fill="#AAA" stroke="#AAA" text-anchor="end">CONDITIONING</text><g transform="translate(1750.1 1575.35)" fill="none" stroke="#999" stroke-width="1.4" stroke-linecap="round" stroke-linejoin="round"><path d="M0.8 7.2V3A2.2 2.2 0 0 1 3 0.8H13A2.2 2.2 0 0 1 15.2 3V13A2.2 2.2 0 0 1 13 15.2H8.8"/><rect x="0.8" y="10.2" width="5" height="5" rx="1"/><path d="M7.2 8.8L12 4M8.2 4H12V7.8"/></g></g><g filter="url(#sh)"><rect x="780.6" y="305.5" width="310" height="180" rx="8" fill="#653"/></g><g><path d="M788.6 305.5H1082.6A8 8 0 0 1 1090.6 313.5V335.5H780.6V313.5A8 8 0 0 1 788.6 305.5Z" fill="#432"/><rect x="780.6" y="334.9" width="310" height="1.2" fill="#000" fill-opacity="0.13"/><circle cx="795.6" cy="320.5" r="5" fill="#666"/><text x="810.6" y="325" font-size="14" fill="#FFF" stroke="#FFF">Note: Raw latent version</text></g><rect x="774.6" y="299.5" width="322" height="192" rx="12.5" fill="none" stroke="#fff" stroke-width="1"/></g><g id="badges"><rect x="2132.2" y="486.4" width="48.4" height="20" rx="5" fill="#0F1F0F"/><text x="2137.6" y="500.6" font-size="12" fill="#fff" stroke="#fff">[BETA]</text><rect x="1744.6" y="1546.3" width="30" height="20" rx="5" fill="#3b82f6"/><g transform="translate(1752.1999999999998 1549.8999999999999)" fill="none" stroke="#fff" stroke-width="1.1"><circle cx="6.4" cy="3" r="1.5"/><circle cx="1.9" cy="10.4" r="1.5"/><circle cx="6.4" cy="10.4" r="1.5"/><circle cx="10.9" cy="10.4" r="1.5"/><path d="M6.4 4.5V8.9M1.9 8.9V6.7H10.9V8.9"/></g></g></svg>
</body>
</html>
